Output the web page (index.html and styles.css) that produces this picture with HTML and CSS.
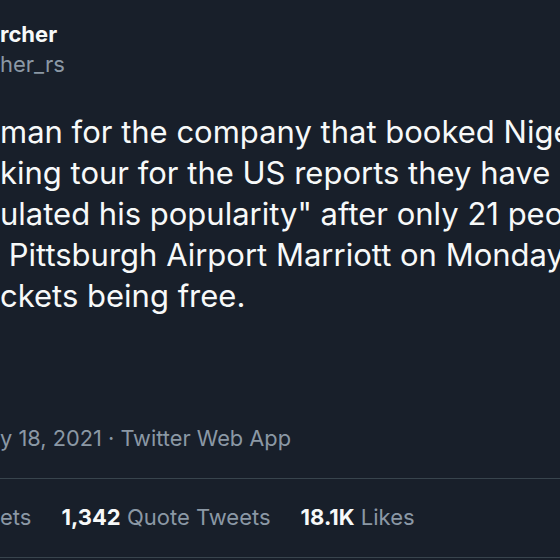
FILE: index.html
```html
<!DOCTYPE html>
<html>
<head>
<meta charset="utf-8">
<link rel="stylesheet" href="styles.css">
</head>
<body>
<div class="tweet">
  <div class="author">
    <div class="name">rcher</div>
    <div class="handle">her_rs</div>
  </div>
  <div class="text">
    <div class="line">man for the company that booked Nigel Farage's</div>
    <div class="line">king tour for the US reports they have "over</div>
    <div class="line">ulated his popularity" after only 21 people</div>
    <div class="line">&nbsp;Pittsburgh Airport Marriott on Monday,</div>
    <div class="line">ckets being free.</div>
  </div>
  <div class="meta">y 18, 2021 · Twitter Web App</div>
  <div class="stats">
    <span class="stat"><span class="label">ets</span></span>
    <span class="stat"><b>1,342</b> <span class="label">Quote Tweets</span></span>
    <span class="stat"><b>18.1K</b> <span class="label">Likes</span></span>
  </div>
</div>
</body>
</html>
```
FILE: styles.css
```css
html, body {
  margin: 0;
  padding: 0;
  background: #181f2a;
  overflow: hidden;
  width: 560px;
  height: 560px;
}
.tweet {
  font-family: Inter, "Liberation Sans", sans-serif;
  color: #f7f9f9;
  white-space: nowrap;
}
.author {
  padding-top: 19px;
}
.name {
  font-size: 22px;
  font-weight: 700;
  line-height: 30px;
}
.handle {
  font-size: 22px;
  line-height: 30px;
  color: #8b98a5;
}
.text {
  margin-top: 32px;
  font-size: 31px;
  line-height: 41px;
}
.meta {
  margin-top: 107px;
  font-size: 21.8px;
  line-height: 30px;
  color: #8b98a5;
  padding-bottom: 25px;
  border-bottom: 1px solid #38444d;
}
.stats {
  display: flex;
  gap: 30px;
  font-size: 22px;
  line-height: 30px;
  padding: 23px 0 25px;
  border-bottom: 1px solid #38444d;
}
.stats b {
  font-weight: 700;
  color: #f7f9f9;
}
.label {
  color: #8b98a5;
}
```
